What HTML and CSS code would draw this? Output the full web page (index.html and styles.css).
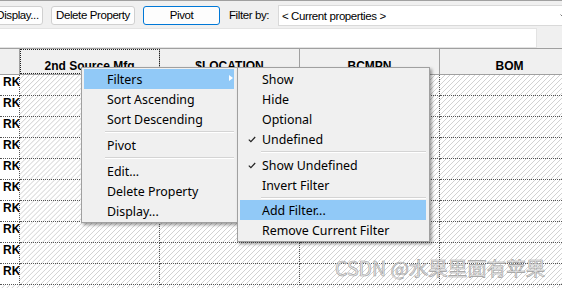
FILE: index.html
```html
<!DOCTYPE html>
<html>
<head>
    <title>Property Grid</title>
    <link rel="stylesheet" href="styles.css">
</head>
<body>
<div class="toolbar">
    <button class="btn btn-cut">Display...</button>
    <button class="btn btn-delete">Delete Property</button>
    <button class="btn btn-pivot">Pivot</button>
    <span class="filter-label">Filter by:</span>
    <div class="select">
        <span>&lt; Current properties &gt;</span>
        <svg class="chevron" width="6" height="4" viewBox="0 0 6 4"><polyline points="0.5,0.5 3,3 5.5,0.5" fill="none" stroke="#777" stroke-width="1"/></svg>
    </div>
</div>
<div class="searchrow"><div class="search"></div></div>
<div class="grid">
    <div class="ghead">
        <div class="hcell"></div>
        <div class="hcell focus">2nd Source Mfg</div>
        <div class="hcell">$LOCATION</div>
        <div class="hcell">BCMPN</div>
        <div class="hcell">BOM</div>
    </div>
    <div class="gbody" id="gbody"></div>
</div>

<div class="menu menu-main">
    <div class="mi active">Filters<span class="arrow"></span></div>
    <div class="mi">Sort Ascending</div>
    <div class="mi">Sort Descending</div>
    <div class="sep"></div>
    <div class="mi">Pivot</div>
    <div class="sep"></div>
    <div class="mi">Edit...</div>
    <div class="mi">Delete Property</div>
    <div class="mi">Display...</div>
</div>

<div class="menu menu-sub">
    <div class="mi">Show</div>
    <div class="mi">Hide</div>
    <div class="mi">Optional</div>
    <div class="mi checked">Undefined<svg class="check" width="8" height="7" viewBox="0 0 8 7"><polyline points="0.8,3.6 2.9,5.7 7.2,1" fill="none" stroke="#222" stroke-width="1.2"/></svg></div>
    <div class="sep"></div>
    <div class="mi checked">Show Undefined<svg class="check" width="8" height="7" viewBox="0 0 8 7"><polyline points="0.8,3.6 2.9,5.7 7.2,1" fill="none" stroke="#222" stroke-width="1.2"/></svg></div>
    <div class="mi">Invert Filter</div>
    <div class="sep sep-short"></div>
    <div class="mi active">Add Filter...</div>
    <div class="mi">Remove Current Filter</div>
</div>

<div class="watermark">CSDN @水果里面有苹果</div>

<script>
    // fill the grid with the rows
    var body = document.getElementById("gbody");
    for (var i = 0; i < 10; i++) {
        var row = document.createElement("div");
        row.className = "grow";
        row.innerHTML = '<div class="cell rowhead">RK</div><div class="cell"></div><div class="cell"></div><div class="cell"></div><div class="cell"></div>';
        body.appendChild(row);
    }
</script>
</body>
</html>
```

FILE: styles.css
```css
body {
    margin: 0;
    width: 562px;
    height: 288px;
    overflow: hidden;
    position: relative;
    background: #f0f0f0;
    font-family: "Liberation Sans", Arial, sans-serif;
}
.toolbar {
    border-top: 1px solid #a0a0a0;
    display: flex;
    align-items: flex-start;
    gap: 8px;
    padding-top: 5px;
    box-sizing: border-box;
    height: 28px;
    white-space: nowrap;
}
.btn {
    flex: none;
    height: 19px;
    box-sizing: border-box;
    border: 1px solid #d0d0d0;
    border-radius: 3px;
    background: #fdfdfd;
    font-family: "Liberation Sans", Arial, sans-serif;
    font-size: 11.5px;
    letter-spacing: -0.4px;
    line-height: 17px;
    padding: 0;
    color: #000;
}
.btn-cut {
    width: 51px;
    margin-left: -8px;
}
.btn-delete {
    width: 84px;
}
.btn-pivot {
    width: 77px;
    border-color: #0078d7;
}
.filter-label {
    flex: none;
    width: 41px;
    font-size: 11.5px;
    letter-spacing: -0.4px;
    line-height: 19px;
    margin-left: 1px;
}
.select {
    flex: none;
    width: 290px;
    height: 21px;
    margin-top: -1px;
    box-sizing: border-box;
    border: 1px solid #d9d9d9;
    background: #fff;
    display: flex;
    justify-content: space-between;
    align-items: center;
    padding: 0 7px 0 3px;
    font-size: 11.5px;
    letter-spacing: -0.4px;
}
.chevron {
    margin-right: -6px;
}
.searchrow {
    height: 20px;
}
.search {
    width: 538px;
    height: 20px;
    margin-left: -1px;
    box-sizing: border-box;
    background: #fff;
    border: 1px solid #e3e3e3;
}
.grid {
    border-top: 1px solid #a0a0a0;
}
.ghead, .grow {
    display: grid;
    grid-template-columns: 20px 140px 140px 140px 140px;
}
.ghead {
    height: 26px;
    box-sizing: border-box;
    border-bottom: 1px solid #a0a0a0;
}
.hcell {
    border-right: 1px solid #a0a0a0;
    text-align: center;
    font-weight: bold;
    font-size: 12px;
    line-height: 16px;
    padding-top: 9px;
    white-space: nowrap;
    overflow: hidden;
}
.hcell.focus {
    outline: 1px dotted #222;
    outline-offset: -1px;
}
.gbody {
    height: 213px;
    overflow: hidden;
    background: repeating-linear-gradient(135deg, #fff 0, #fff 2.6px, #d2d2d2 2.8px, #d2d2d2 3.3px, #fff 3.54px);
}
.grow {
    height: 21px;
}
.cell {
    border-right: 1px dotted #555;
    border-bottom: 1px dotted #555;
}
.rowhead {
    background: #fff;
    font-weight: bold;
    font-size: 12px;
    line-height: 14px;
    padding-left: 3px;
    overflow: hidden;
    white-space: nowrap;
}
.menu {
    position: absolute;
    top: 67px;
    background: #f0f0f0;
    border: 1px solid #a0a0a0;
    box-shadow: 2px 2px 3px rgba(0, 0, 0, 0.38);
    padding: 1px 3px 1px 2px;
    font-family: "Noto Sans", sans-serif;
    font-size: 12.4px;
    color: #000;
    box-sizing: border-box;
}
.menu-main {
    left: 81px;
    width: 157px;
}
.menu-sub {
    left: 237px;
    width: 193px;
}
.mi {
    position: relative;
    height: 20px;
    line-height: 22px;
    padding-left: 23px;
    white-space: nowrap;
}
.menu-sub .mi {
    padding-left: 22px;
}
.mi.active {
    background: #91c9f7;
}
.arrow {
    position: absolute;
    right: 1px;
    top: 6px;
    border-left: 4px solid #fff;
    border-top: 3.5px solid transparent;
    border-bottom: 3.5px solid transparent;
}
.check {
    position: absolute;
    left: 8px;
    top: 7px;
}
.sep {
    height: 6px;
    padding-top: 2px;
    box-sizing: border-box;
    margin-left: 21px;
}
.sep::before {
    content: "";
    display: block;
    border-top: 1px solid #d4d4d4;
    border-bottom: 1px solid #fff;
}
.sep-short {
    height: 5px;
}
.watermark {
    position: absolute;
    left: 335px;
    top: 255px;
    font-family: "Noto Sans CJK SC", sans-serif;
    font-size: 19.5px;
    line-height: 26px;
    color: rgba(235, 235, 235, 0.85);
    -webkit-text-stroke: 0.6px #9c9c9c;
    white-space: nowrap;
}
```
